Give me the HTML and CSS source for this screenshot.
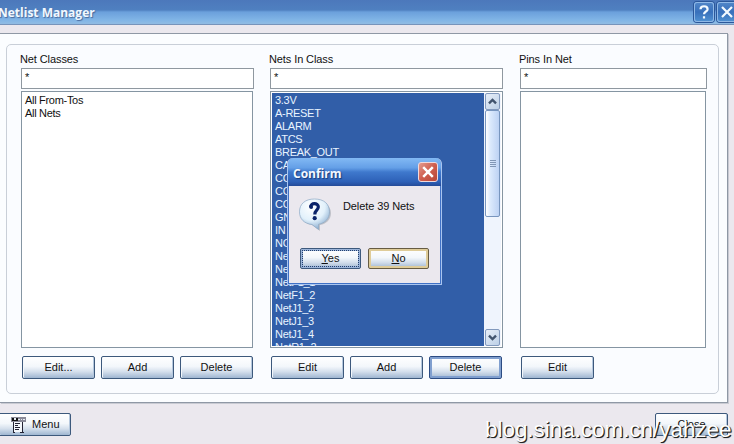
FILE: index.html
```html
<!DOCTYPE html>
<html lang="en">
<head>
<meta charset="utf-8">
<title>Netlist Manager</title>
<link rel="stylesheet" href="styles.css">
</head>
<body>
<div class="window">
  <header class="titlebar">
    <h1>Netlist Manager</h1>
    <div class="caption-buttons">
      <span class="caption"><svg width="20" height="20" viewBox="0 0 20 20"><path d="M6.5 7.2C6.5 3.3 13.6 3.3 13.6 7.2C13.6 9.7 10 9.4 10 12.2M10 14.2v2.2" /></svg></span>
      <span class="caption"><svg width="20" height="20" viewBox="0 0 20 20"><path d="M5 5L15 15M15 5L5 15" /></svg></span>
    </div>
  </header>
  <main class="panel">
    <div class="group">
      <section class="column">
        <h2>Net Classes</h2>
        <div class="filter">*</div>
        <div class="list plain"><p>All From-Tos</p><p>All Nets</p></div>
        <div class="buttons"><button>Edit...</button><button>Add</button><button>Delete</button></div>
      </section>
      <section class="column">
        <h2>Nets In Class</h2>
        <div class="filter">*</div>
        <div class="list selected">
          <div class="items"><p>3.3V</p><p>A-RESET</p><p>ALARM</p><p>ATCS</p><p>BREAK_OUT</p><p>CA</p><p>CO</p><p>CO</p><p>CO</p><p>GN</p><p>IN</p><p>NO</p><p>Ne</p><p>Ne</p><p>NetF1_1</p><p>NetF1_2</p><p>NetJ1_2</p><p>NetJ1_3</p><p>NetJ1_4</p><p>NetR1_2</p></div>
          <div class="scrollbar">
            <span class="arrow"><svg width="14" height="16" viewBox="0 0 14 16"><path d="M3.2 10L7 6.2L10.8 10" /></svg></span>
            <span class="thumb"><i></i><i></i><i></i><i></i></span>
            <span class="arrow down"><svg width="14" height="16" viewBox="0 0 14 16"><path d="M3.2 6L7 9.8L10.8 6" /></svg></span>
          </div>
        </div>
        <div class="buttons"><button>Edit</button><button>Add</button><button class="focused">Delete</button></div>
      </section>
      <section class="column narrow">
        <h2>Pins In Net</h2>
        <div class="filter">*</div>
        <div class="list plain"></div>
        <div class="buttons"><button>Edit</button></div>
      </section>
    </div>
  </main>
  <footer class="footer">
    <button class="menu"><svg width="15" height="16" viewBox="0 0 15 16"><path fill="#8a8a98" d="M0 0h15v5H0z"/><path fill="#e8edf4" d="M3 1h2v2H3zM7 2h2v1H7zM10 2h1v1h-1zM12 2h2v1h-2z"/><path fill="#111" d="M1 1h2v3H1zM5 1h2v3H5zM1 3h6v1H1z"/><path fill="#f4f7fb" d="M3 5h8v10H3z"/><path fill="#223" d="M2 5h1v10H2zM11 5h1v11h-1zM2 15h2v1H2zM9 15h4v1H9zM4 6h5v1H4zM4 8h3v1H4zM4 10h5v1H4zM4 12h4v1H4z"/></svg>Menu</button>
    <button class="close">Close</button>
  </footer>
  <div class="watermark">blog.sina.com.cn/yahzee</div>
  <div class="dialog">
    <div class="dialog-title"><span>Confirm</span>
      <span class="dialog-close"><svg width="20" height="20" viewBox="0 0 20 20"><path d="M5.2 5.2L14.8 14.8M14.8 5.2L5.2 14.8" /></svg></span>
    </div>
    <div class="dialog-body">
      <div class="message">
        <svg width="34" height="34" viewBox="0 0 34 34">
          <defs><radialGradient id="bubble" cx=".4" cy=".25" r=".75"><stop offset="0" stop-color="#fff"/><stop offset=".6" stop-color="#e2f1fb"/><stop offset="1" stop-color="#8eb0d2"/></radialGradient></defs>
          <path fill="#9ba0aa" opacity=".55" d="M18 3C27 3 33 8 33 15C33 22 28 26 22 27V33L14 27C7 26 4 22 4 15C4 7 9 3 18 3z"/>
          <path fill="url(#bubble)" stroke="#8ba7c4" stroke-width=".7" d="M16.5 1C26 1 31.5 6 31.5 13.8C31.5 21 27 25 20.5 26.3V31.5L14 26.5C6 25.5 1.5 21 1.5 13.8C1.5 6 7 1 16.5 1z"/>
          <path fill="none" stroke="#0b2369" stroke-width="3.2" d="M12.6 9.4C12.2 4.4 20.5 4.4 20.3 9C20.2 12.2 16.8 12 16.8 16.4"/>
          <circle cx="13.2" cy="9" r="1.9" fill="#0b2369"/><circle cx="16.7" cy="20.2" r="2.1" fill="#0b2369"/>
        </svg>
        <span>Delete 39 Nets</span>
      </div>
      <div class="answers"><button class="yes"><span><u>Y</u>es</span></button><button class="no"><span><u>N</u>o</span></button></div>
    </div>
  </div>
</div>
</body>
</html>
```
FILE: styles.css
```css
* { box-sizing: border-box; }
body { margin: 0; overflow: hidden; font: 11px/13px "Liberation Sans", Arial, sans-serif; color: #111; }
h1, h2, p { margin: 0; }
.window { position: relative; width: 734px; height: 444px; overflow: hidden; background: #ebe8ee; display: flex; flex-direction: column; }

.titlebar { height: 25px; flex: none; display: flex; justify-content: space-between; border-bottom: 1px solid #7794bb; background: linear-gradient(#4c78bb 0, #4f80c0 10px, #6ba0dc 12px, #81b5e6 20px, #91bce3 24px); }
.titlebar h1 { margin-left: -2px; font: bold 12px/25px "Open Sans", sans-serif; color: #f1f8ff; text-shadow: 1px 1px 1px #49699b; white-space: nowrap; }
.caption-buttons { display: flex; gap: 3px; padding-top: 2px; margin-right: -3px; }
.caption { width: 20px; height: 20px; border-radius: 3px; background: linear-gradient(#5287c9, #3870bb 50%, #5192d2); box-shadow: 0 0 0 1px #2b579a, inset 0 0 0 1px #8fb8e6; }
.caption svg { display: block; fill: none; stroke: #f3faff; stroke-width: 2.2; }

.panel { height: 370px; width: 728px; flex: none; margin-top: 8px; padding: 10px 8px 8px 6px; background: #fbfdff; border: solid #8f98a5; border-width: 1px 1px 1px 0; box-shadow: 1px 1px #c8cad2; }
.group { height: 350px; border: 1px solid #c9cfd8; border-radius: 5px; display: flex; gap: 16px; padding: 7px 0 0 14px; background: #fafcff; }
.column { width: 233px; flex: none; display: flex; flex-direction: column; }
.column.narrow { width: 187px; margin-left: 1px; }
h2 { font: 11px/15px "Liberation Sans", Arial, sans-serif; letter-spacing: -.1px; margin-left: -1px; }
.filter { height: 21px; margin-top: 1px; padding: 2px 3px; border: 1px solid #8f98a0; background: #fff; line-height: 13px; }
.list { height: 257px; margin-top: 2px; border: 1px solid #8595a2; background: #fff; letter-spacing: -.3px; }
.list.plain { padding: 2px 3px; margin-right: 1px; }
.list.selected { display: flex; justify-content: space-between; padding: 1px; }
.items { width: 213px; height: 253px; overflow: hidden; padding: 1px 3px 0; background: #315ea8; color: #e9f4ff; }
.items p { height: 13px; }
.scrollbar { width: 17px; display: flex; flex-direction: column; padding: 0 1px; background: #eff4fd; }
.arrow { height: 17px; border: 1px solid #8299bd; border-radius: 2px; background: linear-gradient(135deg, #e7eef8, #bdd0e7); }
.arrow svg { display: block; width: 13px; height: 15px; fill: none; stroke: #41546e; stroke-width: 2.5; }
.arrow.down { margin-top: auto; }
.thumb { height: 107px; border: 1px solid #7895be; border-radius: 2px; background: linear-gradient(90deg, #fff, #dbe9fc 35%, #bdd2f4); display: flex; flex-direction: column; align-items: center; justify-content: center; gap: 1px; }
.thumb i { width: 6px; height: 1px; background: #8196b5; }

.buttons { display: flex; gap: 6px; margin: 8px 0 0 1px; }
button { width: 73px; height: 23px; padding: 0; font: 11px/13px "Liberation Sans", Arial, sans-serif; color: #111; border: 1px solid #3d597c; border-radius: 2px; background: linear-gradient(#fff, #f3f7fb 45%, #d4dfec 70%, #9fb6d1); box-shadow: inset -1px 0 #b5c8de, inset 1px 0 #f4f8fc; }
button.focused { border: 1px solid #2c4c83; box-shadow: inset 0 0 0 2px #809fcf; }

.footer { display: flex; justify-content: space-between; margin-top: 10px; }
.menu { width: 73px; margin-left: -2px; display: flex; align-items: center; gap: 6px; padding-left: 12px; }
.close { margin-right: 6px; }
.watermark { position: absolute; left: 485px; top: 418px; font: 22.4px/24px "Liberation Sans", Arial, sans-serif; color: #fff; white-space: nowrap; text-shadow: 1px 1px #222, 1px 1px 1px #333; }

.dialog { position: absolute; left: 287px; top: 158px; width: 155px; height: 127px; border-radius: 6px 6px 1px 1px; background: #ebe8ee; border: 1px solid #a9c5f0; border-top: 0; overflow: hidden; box-shadow: inset 0 0 0 1px #3f71c6; display: flex; flex-direction: column; }
.dialog-title { height: 28px; flex: none; display: flex; justify-content: space-between; padding: 4px 3px 0 5px; background: linear-gradient(#82b9f4, #649fe7 35%, #3f79cd 50%, #2d60b7 85%, #254b98); font: bold 12px/23px "Open Sans", sans-serif; color: #f3f8ff; text-shadow: 1px 1px 1px #173c7c; }
.dialog-close { width: 20px; height: 20px; border: 1px solid #f0d9dc; border-radius: 3px; background: linear-gradient(135deg, #e39b8f, #cf5e4e 50%, #b74738); }
.dialog-close svg { display: block; margin: -1px; fill: none; stroke: #fff; stroke-width: 2.5; }
.dialog-body { padding: 12px 11px 0 12px; }
.message { height: 50px; display: flex; align-items: flex-start; gap: 11px; }
.message svg { flex: none; margin-left: -2px; }
.message span { padding-top: 2px; white-space: nowrap; letter-spacing: -.1px; }
.answers { display: flex; gap: 7px; }
.answers button { width: 61px; height: 21px; }
.answers .yes { box-shadow: inset 0 0 0 2px #9cb5da; outline: 1px dotted #24406d; outline-offset: -3px; }
.answers .no { border-color: #675c43; box-shadow: inset 0 0 0 2px #dfcc99; }
```
